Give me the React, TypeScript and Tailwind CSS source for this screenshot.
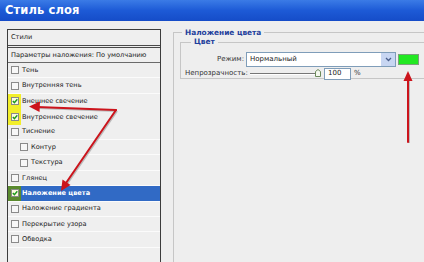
import React from "react";

type Row = {
  label: string;
  checked?: boolean;
  indent?: boolean;
  marked?: boolean;
  selected?: boolean;
};

const rows: Row[] = [
  { label: "Тень" },
  { label: "Внутренняя тень" },
  { label: "Внешнее свечение", checked: true, marked: true },
  { label: "Внутреннее свечение", checked: true, marked: true },
  { label: "Тиснение" },
  { label: "Контур", indent: true },
  { label: "Текстура", indent: true },
  { label: "Глянец" },
  { label: "Наложение цвета", checked: true, selected: true },
  { label: "Наложение градиента" },
  { label: "Перекрытие узора" },
  { label: "Обводка" },
];

function Check({ checked }: { checked?: boolean }) {
  return (
    <span
      className={
        "w-[8px] h-[8px] shrink-0 border border-[#8a8a8a] flex items-center justify-center " +
        (checked ? "bg-[#fbfbe0]" : "bg-[#f7f7f7]")
      }
    >
      {checked && (
        <svg width="6" height="6" viewBox="0 0 6 6">
          <path d="M0.8 3 L2.4 4.6 L5.3 1.2" fill="none" stroke="#1e9a1e" strokeWidth="1.4" />
        </svg>
      )}
    </span>
  );
}

function StyleRow({ row }: { row: Row }) {
  return (
    <div
      className={
        "h-[15.4px] flex items-center " +
        (row.marked ? "" : "border-b border-[#fbfbfb] ") +
        (row.selected ? "bg-[#316ac5] text-white font-bold" : "text-[#222]")
      }
    >
      {row.indent && <span className="w-[9px] shrink-0" />}
      <span
        className={
          "h-full w-[13px] shrink-0 flex items-center pl-[3px] " +
          (row.marked ? "bg-[#f2ee2a]" : row.selected ? "bg-[#5a8a2e]" : "")
        }
      >
        <Check checked={row.checked} />
      </span>
      <span className="pl-[1px] whitespace-nowrap">{row.label}</span>
    </div>
  );
}

export default function App() {
  return (
    <div
      className="relative w-[424px] h-[262px] overflow-hidden bg-[#eeeeee] text-[7px] leading-none"
      style={{ fontFamily: "'DejaVu Sans', 'Liberation Sans', sans-serif" }}
    >
      {/* Title bar */}
      <div className="h-[21px] bg-gradient-to-b from-[#3b7be6] via-[#1d5ad6] to-[#154cc8] flex items-center pl-[5px]">
        <span className="text-white text-[11.5px] font-bold tracking-[0.1px]">Стиль слоя</span>
      </div>

      <div className="flex">
        {/* Styles list */}
        <div className="ml-[7px] mt-[8px] w-[154px] h-[240px] border-t border-x border-[#3c3c3c] bg-[#efefef] text-[6.6px]">
          <div className="h-[18px] flex items-center pl-[3px] border-b-[3px] border-double border-[#4a4a4a] text-[#222]">
            Стили
          </div>
          <div className="h-[15px] flex items-center pl-[3px] border-b border-[#6a6a6a] text-[#222] whitespace-nowrap">
            Параметры наложения: По умолчанию
          </div>
          {rows.map((r) => (
            <StyleRow key={r.label} row={r} />
          ))}
        </div>

        {/* Settings */}
        <fieldset className="ml-[12px] mt-[8px] flex-1 h-[260px] border-t border-l border-[#c6c6c6] pl-[6px] pt-[2px] min-w-0">
          <legend className="ml-[2px] px-[3px] text-[#1f3f9c] font-bold text-[7.4px]">Наложение цвета</legend>
          <fieldset className="border-t border-l border-b border-[#c6c6c6] h-[41px] pl-[4px] min-w-0">
            <legend className="ml-[6px] px-[3px] text-[#1f3f9c] font-bold text-[7.4px]">Цвет</legend>
            <div className="flex items-center mt-[6px]">
              <span className="w-[61px] text-right text-[#333] pr-[2px]">Режим:</span>
              <div className="w-[150px] h-[15px] bg-white border border-[#7f9db9] flex items-center justify-between pl-[3px]">
                <span className="text-[#222]">Нормальный</span>
                <span className="w-[14px] h-[13px] bg-[#c8d6f2] flex items-center justify-center">
                  <svg width="7" height="5" viewBox="0 0 7 5">
                    <path d="M1 1 L3.5 3.5 L6 1" fill="none" stroke="#4a5f8c" strokeWidth="1.3" />
                  </svg>
                </span>
              </div>
              <span className="ml-[2px] w-[21px] h-[11px] bg-[#22e822] border border-[#7aa07a]" />
            </div>
            <div className="flex items-center mt-[1px]">
              <span className="w-[61px] text-right text-[#333] pr-[2px]">Непрозрачность:</span>
              <div className="ml-[4px] w-[66px] h-[2px] border-t border-[#777] border-b border-b-white" />
              <svg width="6" height="8" viewBox="0 0 6 8" className="-ml-[1px] -mt-[1px]">
                <path d="M0.5 7.5 V2.5 L3 0.5 L5.5 2.5 V7.5 Z" fill="#f4f8ee" stroke="#6c8a5c" />
              </svg>
              <div className="ml-[3px] w-[27px] h-[12px] bg-white border border-[#7f9db9] flex items-center pl-[3px] text-[#222]">
                100
              </div>
              <span className="ml-[3px] text-[#333]">%</span>
            </div>
          </fieldset>
        </fieldset>
      </div>

      {/* Annotation arrows */}
      <svg className="absolute inset-0 pointer-events-none" width="424" height="262" viewBox="0 0 424 262">
        <g stroke="#9a9a9a" strokeWidth="2" opacity="0.6" fill="none">
          <path d="M117 111 L38 108" />
          <path d="M117 111 L67 184" />
          <path d="M409 143 L409 80" />
        </g>
        <g stroke="#cc141c" strokeWidth="2" fill="none" strokeLinecap="round">
          <path d="M116 110 L37 107" />
          <path d="M116 110 L66 183" />
          <path d="M408 142 L408 79" />
        </g>
        <g fill="#cc141c">
          <polygon points="29,106.5 40,101.5 39.5,112" />
          <polygon points="61,191 62.5,179.5 70.5,185" />
          <polygon points="408,71 403.5,81 412.5,81" />
        </g>
      </svg>
    </div>
  );
}
